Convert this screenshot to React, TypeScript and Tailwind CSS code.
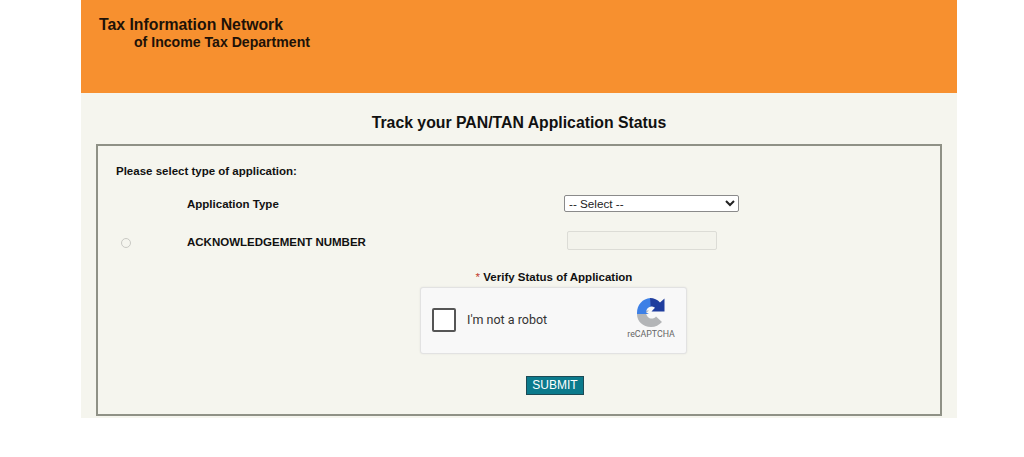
function RecaptchaLogo() {
  return (
    <svg width="28" height="29" viewBox="0 0 28 29" className="block">
      {/* grey lower arc */}
      <path d="M0 15 L0 16 C0 23.5 6 29 14 29 C18.5 29 22 27 25 24 L19 18.5 C18 20 16.5 20.5 14.5 20.5 C12 20.5 9.5 18.5 9 15 L12 12.5 L4 12.5 Z" fill="#b3b5b7" />
      {/* light blue left arc */}
      <path d="M0 15 C0 7 5.5 0.5 13.5 0 L14 8.5 C11 9 9 11.5 9 14.5 L12 16 L0 16 Z" fill="#3d80e6" />
      {/* dark blue top arrow */}
      <path d="M13 0 C17 0 20.5 1.5 23 4.5 L27.5 0.5 L27.5 13.5 L14.5 13.5 L18 9.8 C17 8.8 15.5 8.5 13.5 8.5 Z" fill="#1f3d9e" />
    </svg>
  )
}

export default function App() {
  return (
    <div className="min-h-screen bg-white font-['Liberation_Sans',Arial,sans-serif] text-[#111]">
      <div className="mx-[81px] h-[418px] w-[876px] bg-[#f5f5ee]">
        <div className="h-[93px] bg-[#f7902f] pl-[18px] pt-[15px] font-bold text-[#1d1208]">
          <div className="text-[15.8px] leading-[19px]">Tax Information Network</div>
          <div className="pl-[35px] text-[14.1px] leading-[16px]">of Income Tax Department</div>
        </div>

        <h1 className="h-[51px] pt-[20px] text-center text-[15.8px] leading-[19px] font-bold">
          Track your PAN/TAN Application Status
        </h1>

        <div className="mx-[15px] h-[272px] border-2 border-[#8f9186] pt-[18px] text-[11.5px] font-bold">
          <div className="pl-[18px] leading-[14px]">Please select type of application:</div>

          <div className="mt-[16px] flex h-[18px] items-center">
            <div className="w-[89px]" />
            <div className="w-[377px] pt-[3px]">Application Type</div>
            <select className="h-[17px] w-[175px] rounded-[2px] border border-[#8a8a8a] bg-white text-[11.7px] font-normal text-[#222]">
              <option>-- Select --</option>
            </select>
          </div>

          <div className="mt-[18px] flex h-[20px] items-center">
            <div className="w-[89px] pl-[23px] pt-[6px]">
              <div className="h-[10px] w-[10px] rounded-full border border-[#c9c9c4]" />
            </div>
            <div className="w-[380px] pt-[6px]">ACKNOWLEDGEMENT NUMBER</div>
            <div className="h-[19px] w-[150px] rounded-[2px] border border-[#dcdcd6] bg-[#f3f3ec]" />
          </div>

          <div className="mt-[20px] ml-[70px] text-center leading-[14px]">
            <span className="font-normal text-[#c0392b]">*</span> Verify Status of Application
          </div>

          <div className="mt-[3px] ml-[322px] flex h-[67px] w-[267px] items-center rounded-[3px] border border-[#e2e2e2] bg-[#f8f8f8] shadow-[0_0_2px_rgba(0,0,0,0.08)]">
            <div className="mb-[2px] ml-[11px] h-[24px] w-[24px] rounded-[2px] border-2 border-[#555] bg-white" />
            <div className="ml-[11px] font-['Roboto',sans-serif] text-[12.5px] font-normal text-[#333]">I'm not a robot</div>
            <div className="mr-[10px] ml-auto flex w-[50px] flex-col items-center pb-[5px]">
              <RecaptchaLogo />
              <div className="mt-[2px] font-['Roboto',sans-serif] text-[8.8px] leading-[10px] font-normal text-[#666]">reCAPTCHA</div>
            </div>
          </div>

          <div className="mt-[22px] ml-[428px]">
            <button className="h-[19px] w-[58px] border border-[#1c4a55] bg-[#0b7a8c] text-[12px] leading-[17px] font-normal text-white">
              SUBMIT
            </button>
          </div>
        </div>
      </div>
    </div>
  )
}
